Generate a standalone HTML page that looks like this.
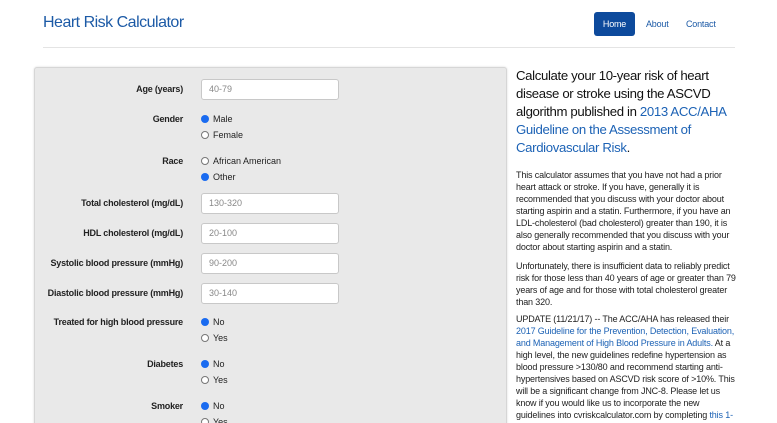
<!DOCTYPE html>
<html><head><meta charset="utf-8"><style>
*{margin:0;padding:0;box-sizing:border-box}
html,body{width:777px;height:423px;overflow:hidden}
body{background:#fff;font-family:"Liberation Sans",Arial,sans-serif;color:#222;position:relative}
.a{position:absolute}
.title{left:43px;top:14px;font-size:16px;letter-spacing:-0.5px;color:#1c5aa6}
.home{left:594px;top:12px;width:41px;height:24px;background:#0d4a9c;border-radius:3px;color:#fff;font-size:9px;letter-spacing:-0.2px;text-align:center;line-height:24px}
.nav{top:12px;line-height:24px;font-size:9px;letter-spacing:-0.2px;color:#1c5aa6}
.rule{left:43px;top:47px;width:692px;height:1px;background:#e4e4e4}
.panel{left:34px;top:67px;width:473px;height:360px;background:#e9e9e9;border:1px solid #d6d6d6;border-radius:3px;box-shadow:0 0 2px rgba(0,0,0,.15)}
.lbl{right:594px;font-size:9px;letter-spacing:-0.2px;font-weight:bold;color:#222;text-align:right;white-space:nowrap}
.inp{left:201px;width:138px;height:21px;background:#fff;border:1px solid #c8c8c8;border-radius:3px;font-size:9px;color:#888;padding-left:7px;line-height:19px}
.r{left:201px;font-size:9px;color:#222;white-space:nowrap;line-height:10px}
.r i{display:inline-block;width:8px;height:8px;border-radius:50%;border:1px solid #777;background:#fff;vertical-align:-1px;margin-right:4px}
.r i.on{border:none;background:#1a6bf0}
.h{left:516px;top:67px;width:226px;font-size:13.2px;letter-spacing:-0.35px;line-height:18px;color:#111}
.p{left:516px;width:224px;font-size:9px;letter-spacing:-0.15px;line-height:12px;color:#222}
a{color:#1c62b5;text-decoration:none}
</style></head><body>
<div class="a title">Heart Risk Calculator</div>
<div class="a home">Home</div>
<div class="a nav" style="left:646px">About</div>
<div class="a nav" style="left:686px">Contact</div>
<div class="a rule"></div>
<div class="a panel"></div>
<div class="a lbl" style="top:84px">Age (years)</div>
<div class="a inp" style="top:79px">40-79</div>
<div class="a lbl" style="top:114px">Gender</div>
<div class="a r" style="top:114px"><i class="on"></i>Male</div>
<div class="a r" style="top:130px"><i></i>Female</div>
<div class="a lbl" style="top:156px">Race</div>
<div class="a r" style="top:156px"><i></i>African American</div>
<div class="a r" style="top:172px"><i class="on"></i>Other</div>
<div class="a lbl" style="top:198px">Total cholesterol (mg/dL)</div>
<div class="a inp" style="top:193px">130-320</div>
<div class="a lbl" style="top:228px">HDL cholesterol (mg/dL)</div>
<div class="a inp" style="top:223px">20-100</div>
<div class="a lbl" style="top:258px">Systolic blood pressure (mmHg)</div>
<div class="a inp" style="top:253px">90-200</div>
<div class="a lbl" style="top:288px">Diastolic blood pressure (mmHg)</div>
<div class="a inp" style="top:283px">30-140</div>
<div class="a lbl" style="top:317px">Treated for high blood pressure</div>
<div class="a r" style="top:317px"><i class="on"></i>No</div>
<div class="a r" style="top:333px"><i></i>Yes</div>
<div class="a lbl" style="top:359px">Diabetes</div>
<div class="a r" style="top:359px"><i class="on"></i>No</div>
<div class="a r" style="top:375px"><i></i>Yes</div>
<div class="a lbl" style="top:401px">Smoker</div>
<div class="a r" style="top:401px"><i class="on"></i>No</div>
<div class="a r" style="top:417px"><i></i>Yes</div>
<div class="a h">Calculate your 10-year risk of heart disease or stroke using the ASCVD algorithm published in <a>2013 ACC/AHA Guideline on the Assessment of Cardiovascular Risk</a>.</div>
<div class="a p" style="top:169px">This calculator assumes that you have not had a prior heart attack or stroke. If you have, generally it is recommended that you discuss with your doctor about starting aspirin and a statin. Furthermore, if you have an LDL-cholesterol (bad cholesterol) greater than 190, it is also generally recommended that you discuss with your doctor about starting aspirin and a statin.</div>
<div class="a p" style="top:260px">Unfortunately, there is insufficient data to reliably predict risk for those less than 40 years of age or greater than 79 years of age and for those with total cholesterol greater than 320.</div>
<div class="a p" style="top:313px">UPDATE (11/21/17) -- The ACC/AHA has released their <a>2017 Guideline for the Prevention, Detection, Evaluation, and Management of High Blood Pressure in Adults.</a> At a high level, the new guidelines redefine hypertension as blood pressure &gt;130/80 and recommend starting anti-hypertensives based on ASCVD risk score of &gt;10%. This will be a significant change from JNC-8. Please let us know if you would like us to incorporate the new guidelines into cvriskcalculator.com by completing <a>this 1-minute survey</a>.</div>
</body></html>
